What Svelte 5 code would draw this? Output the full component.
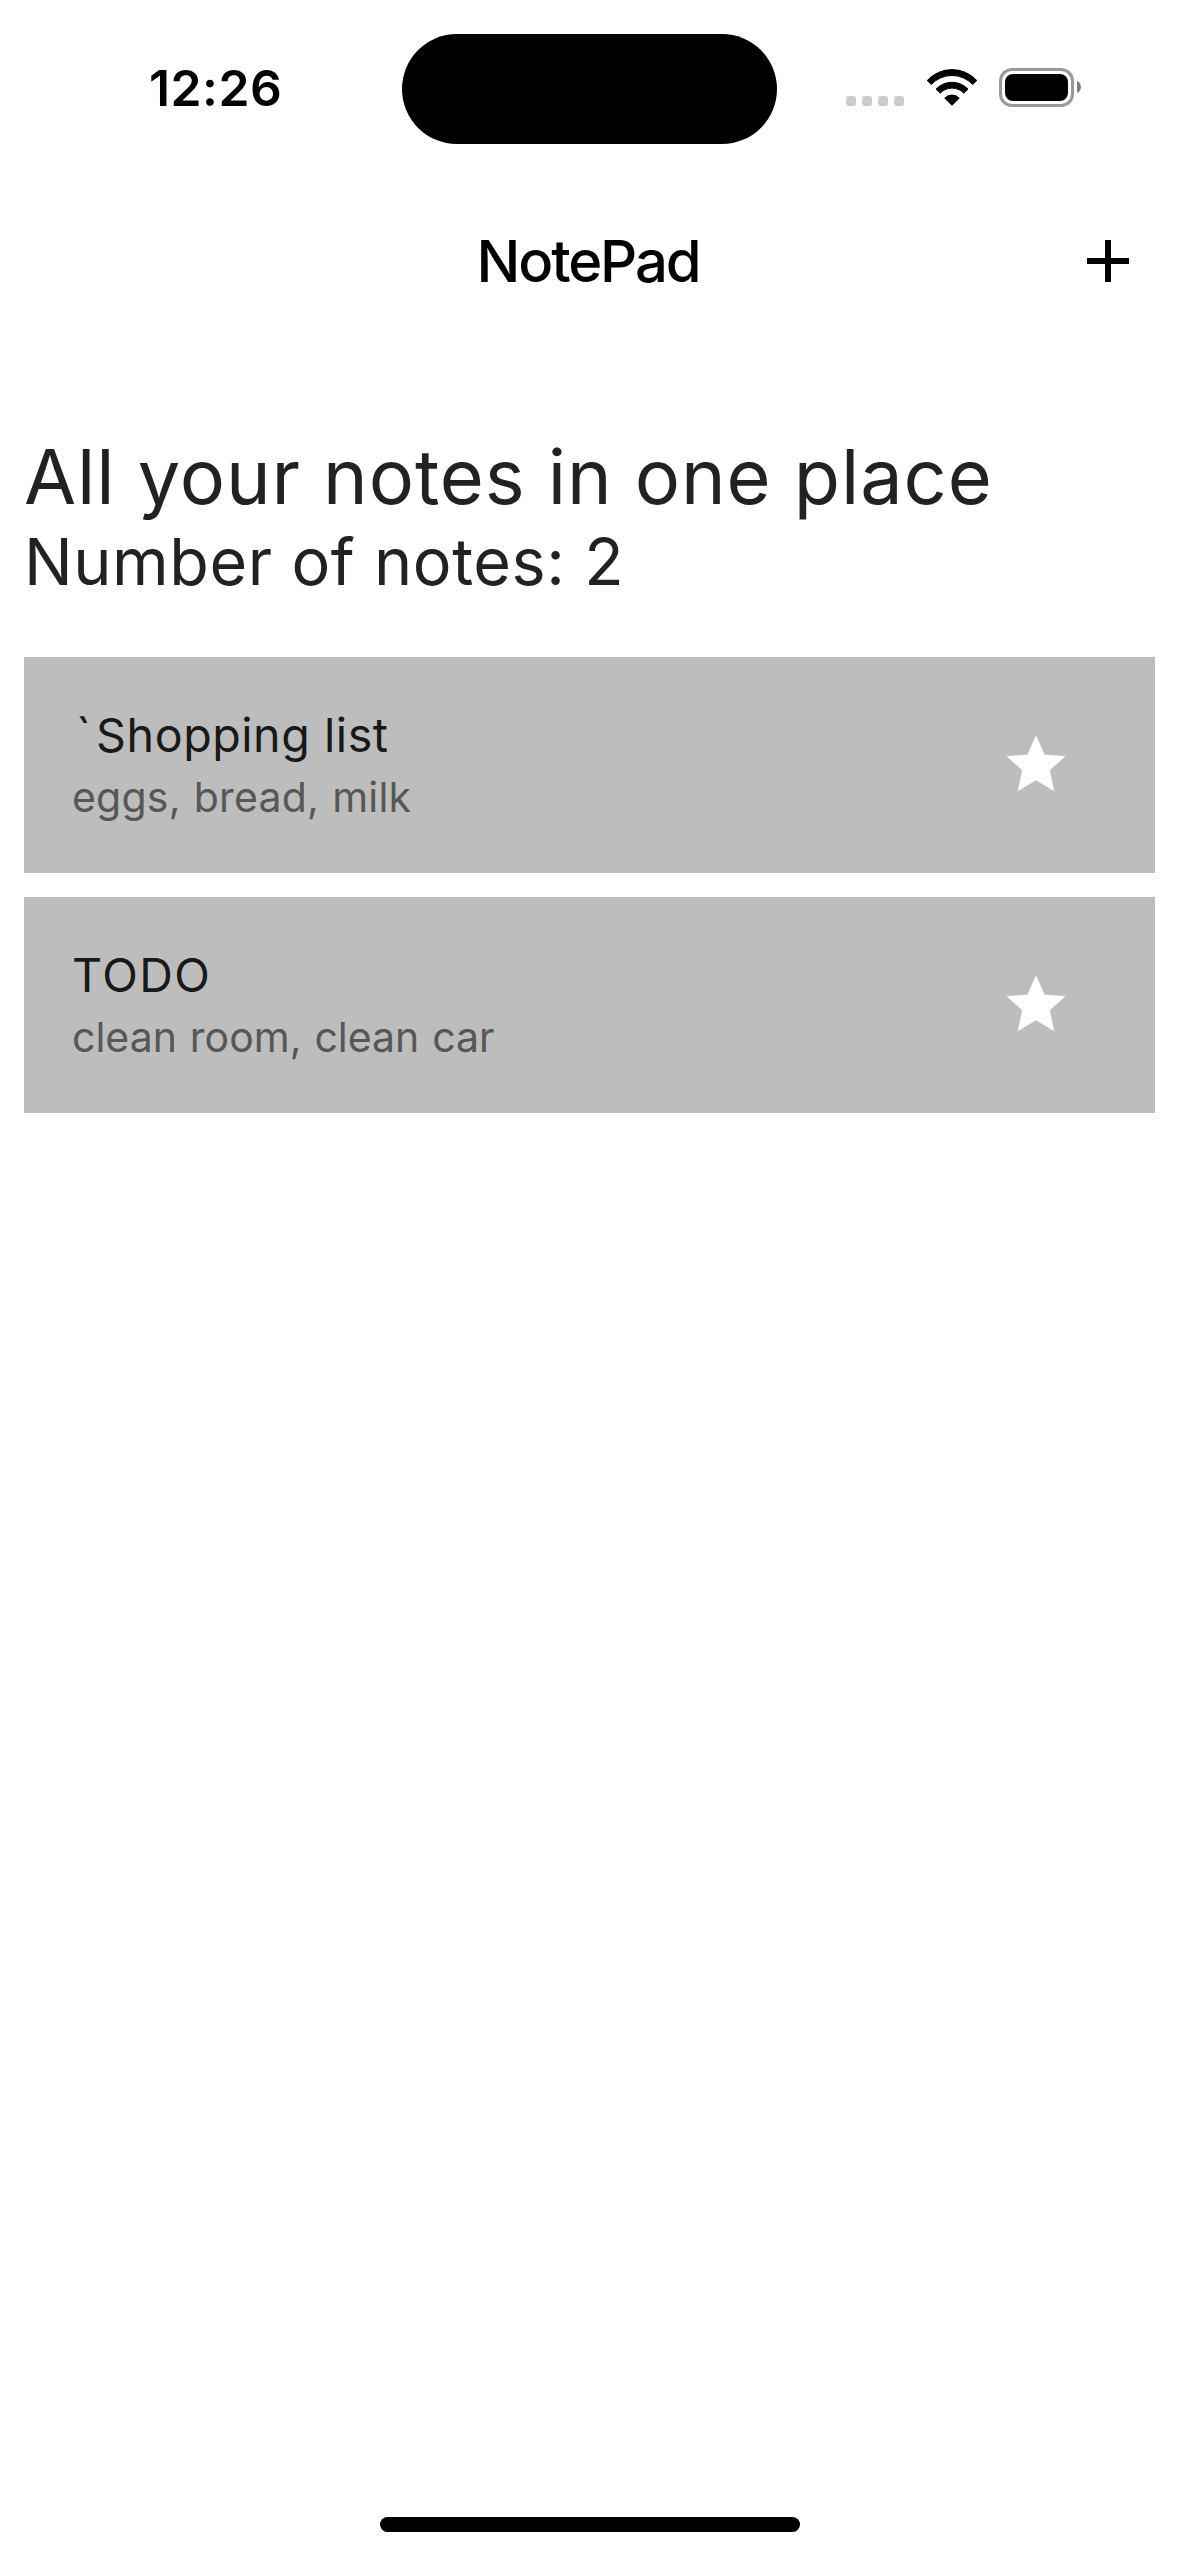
<script>
  const notes = [
    { mark: '`', title: 'Shopping list', body: 'eggs, bread, milk', kind: 'quoted' },
    { mark: '', title: 'TODO', body: 'clean room, clean car', kind: 'caps' }
  ];
</script>

<div class="screen">
  <header class="status">
    <div class="side"><span class="time">12:26</span></div>
    <div class="island"></div>
    <div class="side indicators">
      <div class="signal"><i></i><i></i><i></i><i></i></div>
      <svg class="wifi" width="52" height="39" viewBox="-78 -114 156 117" aria-label="Wi-Fi">
        <path d="M-74.5 -76.5A101 101 0 0 1 74.5 -76.5L62 -64.5A84.5 84.5 0 0 0 -62 -64.5Z" />
        <path d="M-48 -50.5A66 66 0 0 1 48 -50.5L35.5 -38.5A49 49 0 0 0 -35.5 -38.5Z" />
        <path d="M-21.5 -23.5A29 29 0 0 1 21.5 -23.5L0 -2Z" />
      </svg>
      <div class="battery"><div class="level"></div></div>
      <svg class="tip" width="4" height="12" viewBox="0 0 4 12"><path d="M0 0C5.3 2.3 5.3 9.7 0 12Z" /></svg>
    </div>
  </header>

  <nav>
    <div></div>
    <h1>NotePad</h1>
    <button aria-label="Add note">
      <svg width="42" height="42" viewBox="0 0 42 42"><path d="M18 0h6v18h18v6h-18v18h-6v-18h-18v-6h18z" /></svg>
    </button>
  </nav>

  <main>
    <h2>All your notes in one place</h2>
    <p class="count">Number of notes: {notes.length}</p>
    <ul>
      {#each notes as note}
        <li class={note.kind}>
          <div>
            <h3>{#if note.mark}<span class="mark">{note.mark}</span>{/if}{note.title}</h3>
            <p>{note.body}</p>
          </div>
          <svg class="star" width="60" height="57" viewBox="-30 0 60 57">
            <path d="M0 .3L8.5 19.5L29.5 21.2L13.8 35.2L18.3 56.3L0 45.3L-18.3 56.3L-13.8 35.2L-29.5 21.2L-8.5 19.5Z" />
          </svg>
        </li>
      {/each}
    </ul>
  </main>

  <footer><div class="home"></div></footer>
</div>

<style>
  :global(body) { background: #fff; }
  .screen {
    box-sizing: border-box;
    width: 1179px;
    height: 2556px;
    display: flex;
    flex-direction: column;
    background: #fff;
    color: #000;
    font-family: Inter, "Liberation Sans", sans-serif;
    overflow: hidden;
  }
  h1, h2, h3, p, ul { margin: 0; padding: 0; font-weight: 400; white-space: nowrap; }

  .status {
    flex: none;
    height: 177px;
    box-sizing: border-box;
    padding-top: 33px;
    display: grid;
    grid-template-columns: 402px 375px 402px;
    align-items: start;
  }
  .island { height: 110px; margin-top: 1px; border-radius: 55px; background: #000; }
  .side { display: flex; }
  .time {
    padding-left: 149px;
    line-height: 110px;
    font-size: 49.8px;
    font-weight: 600;
    letter-spacing: 0.5px;
  }
  .indicators { padding: 35px 0 0 69px; align-items: flex-start; }
  .signal { display: flex; gap: 6px; margin-top: 28px; }
  .signal i { width: 10px; height: 10px; border-radius: 3px; background: #ccc; }
  .wifi { display: block; margin-left: 21.5px; }
  .wifi path { stroke: #000; stroke-width: 3; stroke-linejoin: round; }
  .battery {
    box-sizing: border-box;
    width: 75px;
    height: 39px;
    margin-left: 21.5px;
    padding: 3px;
    border: 3px solid #999;
    border-radius: 13px;
  }
  .level { height: 100%; border-radius: 8px; background: #000; }
  .tip { margin: 13px 0 0 3px; fill: #808080; }

  nav {
    flex: none;
    height: 168px;
    display: grid;
    grid-template-columns: 1fr auto 1fr;
    align-items: center;
  }
  h1 {
    font-size: 58px;
    line-height: 168px;
    font-weight: 500;
    letter-spacing: -2.15px;
    padding-right: 3px;
  }
  button {
    justify-self: end;
    margin-right: 50px;
    padding: 0;
    border: 0;
    background: none;
    display: flex;
  }

  main { flex: 1; padding: 85px 24px 0; }
  h2 {
    font-size: 75.6px;
    line-height: 93px;
    letter-spacing: 0.92px;
    color: #222;
  }
  .count {
    font-size: 64.7px;
    line-height: 77px;
    letter-spacing: 0.56px;
    color: #222;
  }
  ul {
    list-style: none;
    margin-top: 57px;
    display: flex;
    flex-direction: column;
    gap: 24px;
  }
  li {
    box-sizing: border-box;
    height: 216px;
    padding: 48px 89px 44px 48px;
    display: flex;
    justify-content: space-between;
    background: #bdbdbd;
  }
  h3 { font-size: 46.6px; line-height: 60px; color: #191919; }
  li p { font-size: 41px; line-height: 64px; letter-spacing: 0.2px; word-spacing: 1.4px; color: #575757; }
  .quoted h3 { letter-spacing: 0.55px; }
  .mark { margin: 0 4.5px 0 4px; }
  .caps h3 { letter-spacing: 1.45px; }
  .caps p { letter-spacing: 0; }
  .star { margin-top: 30px; fill: #fff; }

  footer { flex: none; height: 39px; display: flex; justify-content: center; }
  .home { margin-left: 1px; width: 420px; height: 15px; border-radius: 7.5px; background: #000; }
</style>
